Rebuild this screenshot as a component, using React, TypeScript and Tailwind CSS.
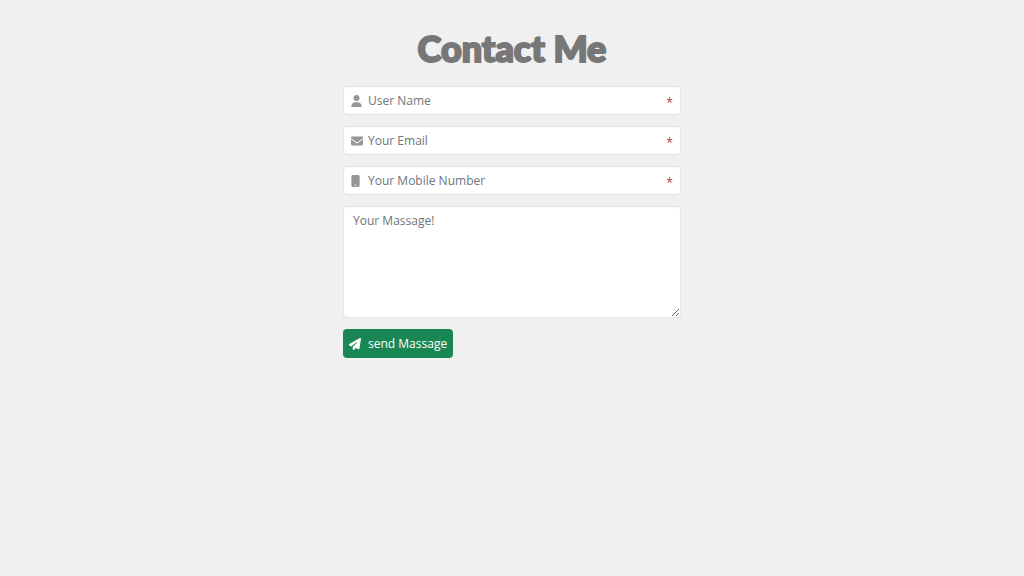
import React from "react";
import { FaUser, FaEnvelope, FaMobileButton, FaPaperPlane } from "react-icons/fa6";
import type { IconType } from "react-icons";

interface Field {
  id: string;
  type: string;
  placeholder: string;
  icon: IconType;
  iconWidth: string;
}

const fields: Field[] = [
  { id: "username", type: "text", placeholder: "User Name", icon: FaUser, iconWidth: "w-[11px]" },
  { id: "email", type: "email", placeholder: "Your Email", icon: FaEnvelope, iconWidth: "w-3" },
  {
    id: "mobile",
    type: "tel",
    placeholder: "Your Mobile Number",
    icon: FaMobileButton,
    iconWidth: "w-[9px]",
  },
];

const TextField: React.FC<{ field: Field }> = ({ field }) => {
  const Icon = field.icon;
  return (
    <label
      htmlFor={field.id}
      className="flex h-[29px] items-center rounded border border-[#e1e5e8] bg-white px-[7px]"
    >
      <span className="w-[17px] shrink-0">
        <Icon className={`h-3 ${field.iconWidth} text-[#969696]`} />
      </span>
      <input
        id={field.id}
        name={field.id}
        type={field.type}
        aria-label={field.placeholder}
        placeholder={field.placeholder}
        required
        className="min-w-0 flex-1 bg-transparent outline-none placeholder:text-[#6c757d]"
      />
      <span className="pt-1 text-[#a84040]">*</span>
    </label>
  );
};

const App: React.FC = () => {
  return (
    <main className="min-h-screen bg-[#f0f0f0] pt-6 font-['Open_Sans',sans-serif] text-xs">
      <h1 className="text-center font-['Lato',sans-serif] text-4xl leading-[48px] font-black text-[#777777] [-webkit-text-stroke:2px_#777777]">
        Contact Me
      </h1>
      <form className="mx-auto mt-[14px] flex w-[33%] flex-col gap-[11px]">
        {fields.map((field) => (
          <TextField key={field.id} field={field} />
        ))}
        <textarea
          name="message"
          aria-label="Your Massage!"
          placeholder="Your Massage!"
          className="block h-28 w-full resize-y rounded border border-[#e1e5e8] bg-white px-[9px] py-1.5 outline-none placeholder:text-[#6c757d]"
        />
        <button
          type="submit"
          className="flex h-[29px] items-center gap-[7px] self-start rounded bg-[#198754] px-1.5 text-white"
        >
          <FaPaperPlane className="h-3 w-3" />
          send Massage
        </button>
      </form>
    </main>
  );
};

export default App;
